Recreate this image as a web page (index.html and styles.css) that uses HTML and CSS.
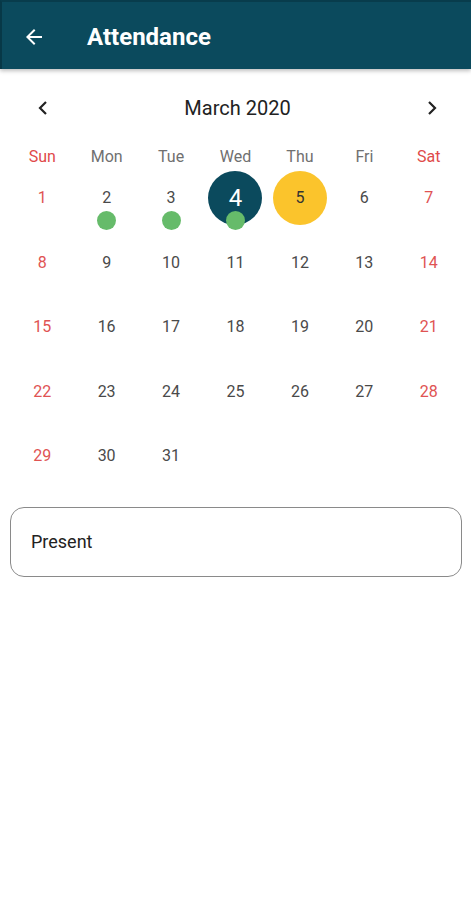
FILE: index.html
```html
<!DOCTYPE html>
<html lang="en">
<head>
    <meta charset="UTF-8">
    <title>Attendance</title>
    <link rel="stylesheet" href="styles.css">
</head>
<body>

<div class="app-bar">
    <svg class="back" width="24" height="24" viewBox="0 0 24 24">
        <path d="M20 11H7.83l5.59-5.59L12 4l-8 8 8 8 1.41-1.41L7.83 13H20v-2z" fill="#fff"/>
    </svg>
    <h1>Attendance</h1>
</div>

<div class="calendar">
    <div class="month-row">
        <svg class="chev" width="12" height="16" viewBox="0 0 12 16">
            <path d="M9 2L3 8l6 6" fill="none" stroke="#222" stroke-width="2.2"/>
        </svg>
        <span class="month">March 2020</span>
        <svg class="chev" width="12" height="16" viewBox="0 0 12 16">
            <path d="M3 2l6 6-6 6" fill="none" stroke="#222" stroke-width="2.2"/>
        </svg>
    </div>

    <div class="weekdays">
        <span class="weekend">Sun</span>
        <span>Mon</span>
        <span>Tue</span>
        <span>Wed</span>
        <span>Thu</span>
        <span>Fri</span>
        <span class="weekend">Sat</span>
    </div>

    <div class="days" id="days"></div>
</div>

<div class="status-box">Present</div>

<script>
    const present = [2, 3, 4];
    const grid = document.getElementById("days");

    for (let d = 1; d <= 31; d++) {
        const cell = document.createElement("div");
        cell.className = "day";
        const col = (d - 1) % 7;
        if (col === 0 || col === 6) cell.classList.add("weekend");
        if (d === 4) cell.classList.add("selected");
        if (d === 5) cell.classList.add("today");

        const num = document.createElement("span");
        num.className = "num";
        num.textContent = d;
        cell.appendChild(num);

        if (present.includes(d)) {
            const dot = document.createElement("span");
            dot.className = "dot";
            cell.appendChild(dot);
        }
        grid.appendChild(cell);
    }
</script>
</body>
</html>
```

FILE: styles.css
```css
body {
    margin: 0;
    font-family: Roboto, "Liberation Sans", sans-serif;
    background: #fff;
}

.app-bar {
    height: 67px;
    background: #0b4a5d;
    border-left: 2px solid #073847;
    border-top: 2px solid #083c4c;
    display: flex;
    align-items: center;
    box-shadow: 0 2px 4px rgba(0, 0, 0, 0.25);
}

.app-bar .back {
    margin-left: 20px;
    margin-top: 2px;
}

.app-bar h1 {
    margin: 2px 0 0 41px;
    color: #fff;
    font-size: 24px;
    font-weight: 700;
}

.calendar {
    padding: 0 10px;
}

.month-row {
    height: 40px;
    margin-top: 19px;
    padding: 0 23px 0 27px;
    display: flex;
    align-items: center;
    justify-content: space-between;
}

.month {
    font-size: 20px;
    color: #222;
}

.weekdays {
    display: grid;
    grid-template-columns: repeat(7, 1fr);
    margin-top: 18px;
    height: 22px;
    line-height: 22px;
    text-align: center;
    font-size: 16px;
    color: #707070;
}

.weekdays .weekend {
    color: #e04a4a;
}

.days {
    display: grid;
    grid-template-columns: repeat(7, 1fr);
    grid-auto-rows: 64.5px;
}

.day {
    position: relative;
    display: flex;
    justify-content: center;
    font-size: 16px;
    color: #4a4a4a;
}

.day.weekend {
    color: #e05353;
}

.num {
    width: 54px;
    height: 54px;
    margin-top: 3px;
    border-radius: 50%;
    line-height: 54px;
    text-align: center;
}

.day.selected .num {
    background: #0b4a5d;
    color: #fff;
    font-size: 24px;
}

.day.today .num {
    background: #fbc42c;
    color: #333;
}

.dot {
    position: absolute;
    top: 43px;
    left: 50%;
    width: 19px;
    height: 19px;
    margin-left: -9.5px;
    border-radius: 50%;
    background: #66bb6a;
}

.status-box {
    margin: 16px 9px 0 10px;
    height: 68px;
    border: 1px solid #8a8a8a;
    border-radius: 14px;
    padding-left: 20px;
    display: flex;
    align-items: center;
    font-size: 18px;
    color: #222;
}
```
